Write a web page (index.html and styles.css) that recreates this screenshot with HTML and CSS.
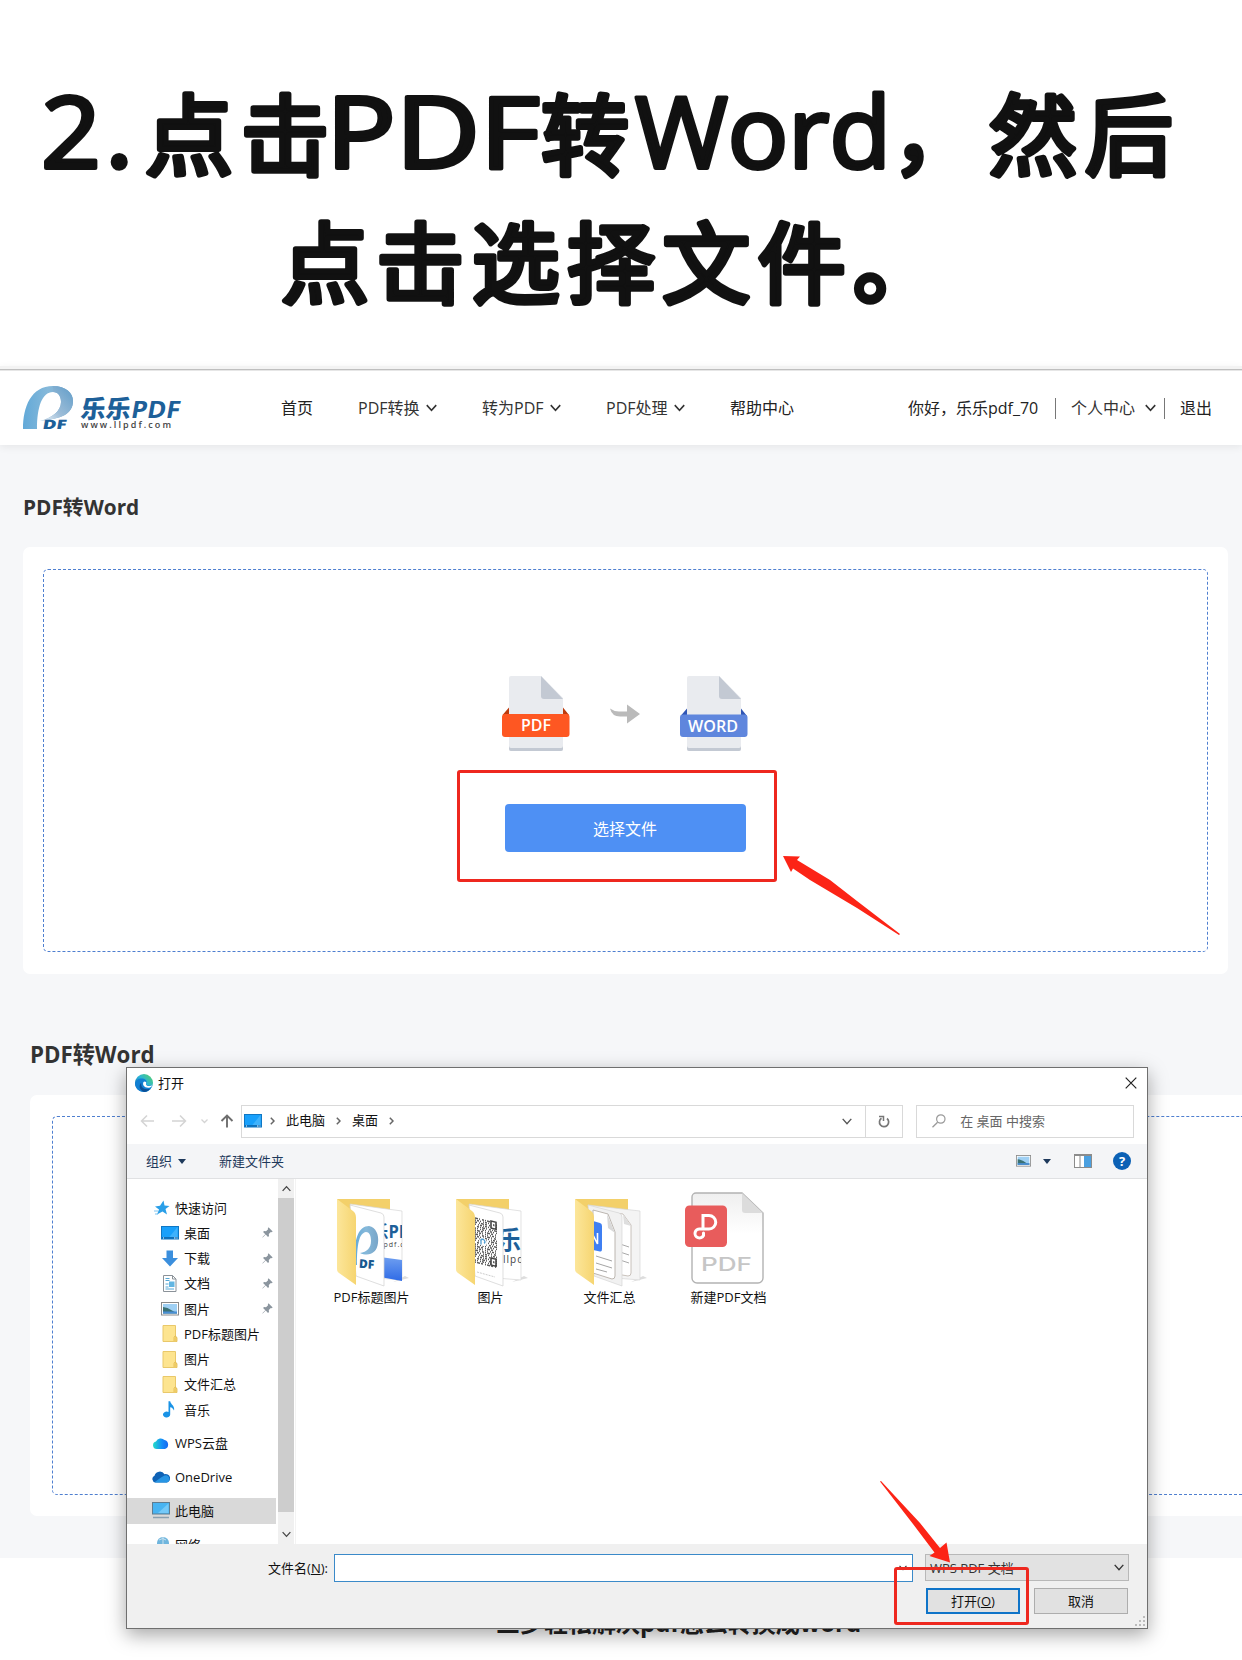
FILE: index.html
```
<!DOCTYPE html>
<html lang="zh-CN">

<head>
    <meta charset="UTF-8">
    <meta name="viewport" content="width=device-width, initial-scale=1.0">
    <title>PDF转Word</title>
    <link rel="stylesheet" href="styles.css">
</head>

<body>

    <!-- shared icons -->
    <svg class="defs" width="0" height="0">
        <defs>
            <linearGradient id="g-logo" x1="0" y1="0" x2="1" y2="0">
                <stop offset="0" stop-color="#62a9d8" />
                <stop offset="0.5" stop-color="#86b9da" />
                <stop offset="1" stop-color="#78a5c8" />
            </linearGradient>
            <linearGradient id="g-bowl" x1="1" y1="0" x2="0" y2="1">
                <stop offset="0" stop-color="#5f9cc8" />
                <stop offset="0.6" stop-color="#9dbdd8" />
                <stop offset="1" stop-color="#f2f6fa" />
            </linearGradient>
            <linearGradient id="g-front" x1="0" y1="0" x2="1" y2="0">
                <stop offset="0" stop-color="#fce69a" />
                <stop offset="1" stop-color="#f6d571" />
            </linearGradient>
            <linearGradient id="g-edge" x1="1" y1="0" x2="0" y2="1">
                <stop offset="0" stop-color="#5ad45a" />
                <stop offset="0.45" stop-color="#2bb5d8" />
                <stop offset="1" stop-color="#0d58a8" />
            </linearGradient>
            <linearGradient id="g-cloud" x1="0" y1="0" x2="1" y2="0">
                <stop offset="0" stop-color="#24dcc8" />
                <stop offset="0.6" stop-color="#148cf8" />
                <stop offset="1" stop-color="#1668f0" />
            </linearGradient>
            <linearGradient id="g-shot" x1="0" y1="0" x2="0" y2="1">
                <stop offset="0" stop-color="#6f9ff0" />
                <stop offset="1" stop-color="#2f6be6" />
            </linearGradient>
            <linearGradient id="g-paper" x1="0" y1="0" x2="0" y2="1">
                <stop offset="0" stop-color="#efefef" />
                <stop offset="0.45" stop-color="#ffffff" />
            </linearGradient>
        </defs>
        <symbol id="chevron" viewBox="0 0 10 7">
            <path d="M0.7 0.9L5 5.6L9.3 0.9" fill="none" stroke="currentColor" stroke-width="1.4" />
        </symbol>
        <symbol id="desktop" viewBox="0 0 18 14">
            <rect x="0.5" y="0.5" width="17" height="12.5" fill="#18a0fb" stroke="#0f77c4" />
            <path d="M8 11.5L16.500 1v10.500z" fill="#3fb2fc" />
            <rect x="1" y="11" width="16" height="1.800" fill="#0e6fb8" />
            <path d="M2 12h1M13 12h1.500M15.500 12h1" stroke="#fff" />
        </symbol>
        <symbol id="folder" viewBox="0 0 15 17">
            <path d="M0.5 0.5h12.500v12h1.500v4h-14z" fill="#fde48f" stroke="#e9c86a" />
            <path d="M11.500 16v-3.500l1-1.500h1v5.500" fill="#f9d978" stroke="#e0b84c" stroke-width="0.8" />
        </symbol>
        <symbol id="picture" viewBox="0 0 18 14">
            <rect x="0.5" y="0.5" width="17" height="12.500" fill="#fff" stroke="#8a8a8a" />
            <rect x="2" y="2" width="14" height="9.500" fill="#9fd0f4" />
            <path d="M2 5c3 .3 6 1.500 9 3.500s4 1.500 5 1.500v1.500H2z" fill="#3b7275" />
            <path d="M2 9.500h14v2H2z" fill="#4a8fd6" />
        </symbol>
        <symbol id="pin" viewBox="0 0 11 11">
            <path d="M6.500 0.300L10.700 4.500L9.500 5.200L8.800 4.900L6.800 7L7 9L6 9.900L3.700 7.600L0.700 10.600L0.300 10.200L3.300 7.200L1.100 5L2 4L4 4.200L6.100 2.200L5.800 1.400z" fill="#8b959e" />
        </symbol>
        <symbol id="folder-back" viewBox="0 0 78 90">
            <path d="M4 1h53v70H30z" fill="#f3d06a" />
            <path d="M60 84l16-4-4-2z" fill="#ddd" />
        </symbol>
        <symbol id="folder-front" viewBox="0 0 78 90">
            <path d="M4 1L20 13Q23 15 23 20V87L6 75Q4 74 4 71z" fill="url(#g-front)" />
        </symbol>
    </svg>

    <div class="page">

        <h1 class="caption">
            <svg width="1242" height="366" viewBox="0 0 1242 366">
                <text class="latin" y="168" x="41" textLength="60" lengthAdjust="spacingAndGlyphs">2</text>
                <text y="167" x="107">.</text>
                <text y="168" x="145" textLength="184">点击</text>
                <text class="latin" y="168" x="326" textLength="214" lengthAdjust="spacingAndGlyphs">PDF</text>
                <text y="168" x="541">转</text>
                <text class="latin" y="168" x="635" textLength="256" lengthAdjust="spacingAndGlyphs">Word</text>
                <text y="166" x="892">，</text>
                <text y="168" x="989" textLength="184">然后</text>
                <text y="296" x="281" textLength="660">点击选择文件。</text>
            </svg>
        </h1>

        <header class="site-header">
            <svg class="logo" width="164" height="46" viewBox="0 0 164 46">
                <path d="M0 44C0 22 8 1 30 1C43 1 50 8 50 16C50 29 38 34 17 36C29 33 38 26 38 17C38 11 35 7 30 7C19 7 14 22 14 44z" fill="url(#g-logo)" />
                <path d="M30 1C43 1 50 8 50 16C50 29 38 34 17 36C29 33 38 26 38 17C38 11 35 7 30 7z" fill="url(#g-bowl)" />
                <text class="logo-small" transform="translate(19 44) skewX(-10)" textLength="24" lengthAdjust="spacingAndGlyphs">DF</text>
                <text class="logo-name" transform="translate(57 33) skewX(-6)" textLength="50" lengthAdjust="spacingAndGlyphs">乐乐</text>
                <text class="logo-pdf" transform="translate(107 33) skewX(-10)" textLength="49" lengthAdjust="spacingAndGlyphs">PDF</text>
                <text class="logo-url" x="58" y="43" textLength="90">www.llpdf.com</text>
            </svg>
            <nav class="nav">
                <a>首页</a>
                <a class="has-menu">PDF转换<svg width="11" height="8"><use href="#chevron" /></svg></a>
                <a class="has-menu">转为PDF<svg width="11" height="8"><use href="#chevron" /></svg></a>
                <a class="has-menu">PDF处理<svg width="11" height="8"><use href="#chevron" /></svg></a>
                <a>帮助中心</a>
            </nav>
            <div class="user">
                <span class="hello">你好，乐乐pdf_70</span>
                <i class="sep"></i>
                <a class="center">个人中心<svg width="11" height="8"><use href="#chevron" /></svg></a>
                <i class="sep"></i>
                <a class="logout">退出</a>
            </div>
        </header>

        <section class="convert">
            <h2>PDF转Word</h2>
            <div class="card">
                <div class="dropzone">
                    <div class="formats">
                        <svg width="68" height="76" viewBox="0 0 68 76">
                            <path d="M9 0H39L61 22V73a2 2 0 0 1-2 2H9a2 2 0 0 1-2-2V2a2 2 0 0 1 2-2z" fill="#e9ebef" />
                            <path d="M39 0L61 23H42a3 3 0 0 1-3-3z" fill="#c3c9d3" />
                            <path d="M7 70q0 2 2 2H59q2 0 2-2v3q0 2-2 2H9q-2 0-2-2z" fill="#c3c9d3" />
                            <path d="M0.500 39L7 31.500V39zM67 39L61 31.500V39z" fill="#bd3b0d" />
                            <path d="M3 38H64.500a3 3 0 0 1 3 3V58a3 3 0 0 1-3 3H3a3 3 0 0 1-3-3V41a3 3 0 0 1 3-3z" fill="#fe5722" />
                            <text class="tag" x="19" y="55" textLength="30" lengthAdjust="spacingAndGlyphs">PDF</text>
                        </svg>
                        <svg width="30" height="20" viewBox="0 0 30 20">
                            <path d="M0 4.500Q4 7.500 9 7.500H17V0.500L30 10L17 19.500V12.500H10Q2 12.500 0 4.500z" fill="#bababa" />
                        </svg>
                        <svg width="68" height="76" viewBox="0 0 68 76">
                            <path d="M9 0H39L61 22V73a2 2 0 0 1-2 2H9a2 2 0 0 1-2-2V2a2 2 0 0 1 2-2z" fill="#e9ebef" />
                            <path d="M39 0L61 23H42a3 3 0 0 1-3-3z" fill="#c3c9d3" />
                            <path d="M7 70q0 2 2 2H59q2 0 2-2v3q0 2-2 2H9q-2 0-2-2z" fill="#c3c9d3" />
                            <path d="M0.500 40L7 32.500V40zM67 40L61 32.500V40z" fill="#2f55b5" />
                            <path d="M3 38.500H64.500a3 3 0 0 1 3 3V58a3 3 0 0 1-3 3H3a3 3 0 0 1-3-3V41.500a3 3 0 0 1 3-3z" fill="#5f86dd" />
                            <text class="tag" x="8" y="56" textLength="50" lengthAdjust="spacingAndGlyphs">WORD</text>
                        </svg>
                    </div>
                    <button class="choose">选择文件</button>
                </div>
            </div>
        </section>

        <section class="convert second">
            <h2>PDF转Word</h2>
            <div class="card">
                <div class="dropzone"></div>
            </div>
        </section>

        <h3 class="article-title">三步轻松解决pdf怎么转换成word</h3>

        <!-- file dialog -->
        <div class="dialog">
            <div class="title-bar">
                <svg width="18" height="18" viewBox="0 0 18 18">
                    <circle cx="9" cy="9" r="9" fill="url(#g-edge)" />
                    <path d="M0 9.500C1 5 5 4 8 4.500C11 5 12 7 11.500 8.500C11 10 11 11 13 11.500C15 12 16.500 11.500 17.500 11C16 15.500 13 18 9 18C4 18 0 14 0 9.500z" fill="#127fd2" />
                    <path d="M6.500 8.500C5 13 9 16.500 15 14.800C13 17 11 18 9 18C4 16 3.500 11 6.500 8.500z" fill="#0c4f96" />
                    <path d="M8.500 8C7 11 9.500 14.500 15 13.500C17 12.500 17.500 11.500 17.500 11C15.500 12.500 11 12.500 11 10C11 9.500 11.500 9 11 8Q9.500 7 8.500 8z" fill="#fff" />
                </svg>
                <span>打开</span>
                <svg class="close" width="12" height="12" viewBox="0 0 12 12">
                    <path d="M0.700 0.700L11.300 11.300M11.300 0.700L0.700 11.300" stroke="#222" stroke-width="1.200" />
                </svg>
            </div>

            <div class="address-bar">
                <svg class="history" width="94" height="16" viewBox="0 0 94 16">
                    <path d="M14 8H1.500M7 2.500L1.500 8L7 13.500M32 8H45.500M40 2.500L45.500 8L40 13.500" fill="none" stroke="#d4d4d4" stroke-width="1.500" />
                    <path d="M61.500 6.500L64.500 9.500L67.500 6.500" fill="none" stroke="#d4d4d4" stroke-width="1.300" />
                    <path d="M87 14.500V2.500M81.500 8L87 2.500L92.500 8" fill="none" stroke="#6e6e6e" stroke-width="1.900" />
                </svg>
                <div class="path">
                    <svg width="18" height="14"><use href="#desktop" /></svg>
                    <svg class="crumb" width="5" height="8" viewBox="0 0 5 8"><path d="M0.800 0.800L4 4L0.800 7.200" fill="none" stroke="#666" stroke-width="1.500" /></svg>
                    <span>此电脑</span>
                    <svg class="crumb" width="5" height="8" viewBox="0 0 5 8"><path d="M0.800 0.800L4 4L0.800 7.200" fill="none" stroke="#666" stroke-width="1.500" /></svg>
                    <span>桌面</span>
                    <svg class="crumb" width="5" height="8" viewBox="0 0 5 8"><path d="M0.800 0.800L4 4L0.800 7.200" fill="none" stroke="#666" stroke-width="1.500" /></svg>
                    <svg class="drop" width="10" height="7"><use href="#chevron" /></svg>
                </div>
                <div class="refresh">
                    <svg width="12" height="13" viewBox="0 0 12 13">
                        <path d="M9 3.500A4.600 4.600 0 1 1 3.500 3.200" fill="none" stroke="#777" stroke-width="1.700" />
                        <path d="M1 1.500H5.500V6" fill="none" stroke="#777" stroke-width="1.500" />
                    </svg>
                </div>
                <div class="search">
                    <svg width="14" height="14" viewBox="0 0 14 14">
                        <circle cx="8.800" cy="5" r="4.200" fill="none" stroke="#9a9a9a" stroke-width="1.200" />
                        <path d="M5.600 8.200L0.500 13.300" stroke="#9a9a9a" stroke-width="1.300" />
                    </svg>
                    <span>在 桌面 中搜索</span>
                </div>
            </div>

            <div class="tool-bar">
                <span>组织</span><i class="caret"></i>
                <span class="new-folder">新建文件夹</span>
                <svg class="view" width="15" height="12" viewBox="0 0 18 14" preserveAspectRatio="none"><use href="#picture" /></svg>
                <i class="caret"></i>
                <svg class="pane" width="18" height="14" viewBox="0 0 18 14">
                    <rect x="0.500" y="0.500" width="17" height="13" fill="#fff" stroke="#8c8c8c" />
                    <path d="M1 1.500h16M6 2v11" stroke="#8c8c8c" />
                    <rect x="10" y="2" width="7" height="11" fill="#4ba0e0" />
                </svg>
                <b class="help">?</b>
            </div>

            <div class="browser">
                <div class="tree">
                    <div class="item root"><svg width="16" height="16" viewBox="0 0 16 16"><path d="M9.500 0.500L10.500 5.500L15.500 6L11.500 9L13 14.500L8.500 11.500L3 14.500L5 9.500L1 6.500L6 5.700z" fill="#2a9fe8" /><path d="M0 11h4M1 14h3" stroke="#7cc3f0" /></svg>快速访问</div>
                    <div class="item"><svg width="18" height="14"><use href="#desktop" /></svg>桌面<svg class="pin" width="11" height="11"><use href="#pin" /></svg></div>
                    <div class="item"><svg width="18" height="17" viewBox="0 0 18 17"><path d="M5.500 0.500h6.500V8h5L9 16.500L1 8h4.500z" fill="#3b8fdd" /></svg>下载<svg class="pin" width="11" height="11"><use href="#pin" /></svg></div>
                    <div class="item"><svg width="18" height="17" viewBox="0 0 18 17"><path d="M2.500 0.500h9l3.500 3.500v12.500h-12.500z" fill="#fff" stroke="#8b9299" /><path d="M11.500 0.500v3.500h3.500" fill="none" stroke="#8b9299" /><path d="M4.500 3.500h4M4.500 5.500h4M4.500 9h3M4.500 12h3M4.500 14h8.500" stroke="#56a8d6" /><path d="M8 6.500h5.500v5.500h-5.500z" fill="#63b6e2" /></svg>文档<svg class="pin" width="11" height="11"><use href="#pin" /></svg></div>
                    <div class="item"><svg width="18" height="14"><use href="#picture" /></svg>图片<svg class="pin" width="11" height="11"><use href="#pin" /></svg></div>
                    <div class="item"><svg width="18" height="17"><use href="#folder" /></svg>PDF标题图片</div>
                    <div class="item"><svg width="18" height="17"><use href="#folder" /></svg>图片</div>
                    <div class="item"><svg width="18" height="17"><use href="#folder" /></svg>文件汇总</div>
                    <div class="item"><svg width="18" height="17" viewBox="0 0 18 17"><path d="M7.500 0.300h1.700C10 4 14 4.500 13 9.500C12 7.500 11 6.500 9.200 6.300V13.500A3.600 3 0 1 1 7.500 11z" fill="#1a93e6" /></svg>音乐</div>
                    <div class="item root apart"><svg width="18" height="14" viewBox="0 0 18 14"><path d="M5 13A3.800 3.800 0 0 1 4 5.500A5.200 5.200 0 0 1 12.500 4A4.700 4.700 0 0 1 13 13z" fill="url(#g-cloud)" /></svg>WPS云盘</div>
                    <div class="item root apart"><svg width="18" height="14" viewBox="0 0 18 14"><path d="M3.500 12.500A3.500 3.500 0 0 1 2.500 5.800A5.500 5.500 0 0 1 12.500 4.200A4.300 4.300 0 0 1 15 12.500z" fill="#0f62b5" /><path d="M2.500 12.200L9 7.500L12.500 5.500A3.700 3.700 0 0 1 15 12.500H3.500z" fill="#2795e4" /></svg>OneDrive</div>
                    <div class="item root apart active"><svg width="18" height="17" viewBox="0 0 18 17"><rect x="0.500" y="0.500" width="17" height="11.500" fill="#48b4f2" stroke="#5f7c90" /><path d="M6 11L16.500 1.500V11z" fill="#74c9f8" /><path d="M1 15.500h16" stroke="#8aa0b0" stroke-width="1.500" /></svg>此电脑</div>
                    <div class="item root apart"><svg width="18" height="17" viewBox="0 0 18 17"><circle cx="11" cy="7" r="6" fill="#6fb5dd" /><path d="M7 4q4-3 7 0M11 1v11" stroke="#c8e2f0" fill="none" /><path d="M3 9h7v6H3z" fill="#3f86c0" /></svg>网络</div>
                </div>
                <div class="scrollbar">
                    <svg class="up" width="9" height="7"><use href="#chevron" /></svg>
                    <div class="thumb"></div>
                    <svg width="9" height="7"><use href="#chevron" /></svg>
                </div>
                <div class="files">
                    <div class="file">
                        <svg width="78" height="90" viewBox="0 0 78 90">
                            <use href="#folder-back" />
                            <path d="M17 6L69 13V82L44 80z" fill="#fff" stroke="#d5d5d5" stroke-width="0.700" />
                            <path d="M47 59L69 62V83L47 79z" fill="url(#g-shot)" />
                            <svg x="48" y="22" width="21" height="32">
                                <text class="thumb-name" x="-9" y="18" textLength="48" lengthAdjust="spacingAndGlyphs">乐PDF</text>
                                <text class="thumb-url" x="-3" y="27">llpdf.com</text>
                            </svg>
                            <path d="M17 7L48 15Q51 16 51 19V88L23 78z" fill="#fff" stroke="#d0d0d0" stroke-width="0.700" />
                            <path d="M21 67C21 39 26 28 36 28C43 29 46 37 45 45C44 55 36 59 27 55C34 54 38 50 38 43C38 37 36 34 33 34C26 35 24 47 24 67z" fill="url(#g-logo)" />
                            <text class="thumb-df" x="26" y="70" transform="rotate(4 28 66)">DF</text>
                            <use href="#folder-front" />
                        </svg>
                        <span>PDF标题图片</span>
                    </div>
                    <div class="file">
                        <svg width="78" height="90" viewBox="0 0 78 90">
                            <use href="#folder-back" />
                            <path d="M17 6L69 13V82L44 80z" fill="#fff" stroke="#d5d5d5" stroke-width="0.700" />
                            <svg x="50" y="27" width="19" height="45">
                                <text class="thumb-name big" x="-5" y="24" textLength="70" lengthAdjust="spacingAndGlyphs">乐PDF</text>
                                <text class="thumb-url big" x="1" y="38">llpdf</text>
                            </svg>
                            <path d="M17 7L48 15Q51 16 51 19V88L23 78z" fill="#fff" stroke="#d0d0d0" stroke-width="0.700" />
                            <g transform="matrix(1 0.250 0 1 23 19)" fill="none" stroke="#5a5a5a" stroke-width="1.300">
                                <path d="M0 1h22M0 17h22M0 33h22" stroke-dasharray="3 1 1 2 2 1 1 1" />
                                <path d="M0 9h22M0 25h22M0 41h22" stroke-dasharray="3 1 1 2 2 1 1 1" stroke-dashoffset="5" />
                                <path d="M0 3h22M0 19h22M0 35h22" stroke-dasharray="1 1 2 1 1 2" />
                                <path d="M0 11h22M0 27h22M0 43h22" stroke-dasharray="1 1 2 1 1 2" stroke-dashoffset="3" />
                                <path d="M0 5h22M0 21h22M0 37h22" stroke-dasharray="2 2 1 1 3 1" />
                                <path d="M0 13h22M0 29h22M0 45h22" stroke-dasharray="2 2 1 1 3 1" stroke-dashoffset="4" />
                                <path d="M0 7h22M0 23h22M0 39h22" stroke-dasharray="1 2 1 1 2 1 1" />
                                <path d="M0 15h22M0 31h22" stroke-dasharray="1 2 1 1 2 1 1" stroke-dashoffset="6" />
                                <path d="M16 0h5v7h-5zM16 37h5v7h-5z" fill="#fff" stroke="#444" stroke-width="1.600" />
                                <path d="M18 3.500h1.500M18 40.500h1.500" stroke-width="2" />
                                <circle cx="8" cy="23" r="4" fill="#fff" stroke="none" />
                                <path d="M6 26v-3a2 2 0 1 1 3 1" stroke="#529dcf" />
                            </g>
                            <path d="M25 74L43 79" stroke="#ccc" stroke-dasharray="2 1" />
                            <use href="#folder-front" />
                        </svg>
                        <span>图片</span>
                    </div>
                    <div class="file">
                        <svg width="78" height="90" viewBox="0 0 78 90">
                            <use href="#folder-back" />
                            <path d="M17 7L69 13V82L44 80z" fill="#f4f4f4" stroke="#d5d5d5" stroke-width="0.700" />
                            <path d="M36 14L52 16L60 27V75Q60 78 57 78L40 75z" fill="#fff" stroke="#bcb4ac" stroke-width="0.800" />
                            <path d="M49 46L58 49M49 54L58 57M49 62L58 65" stroke="#aaa" />
                            <path d="M52 16L60 28L53 26z" fill="#dedede" />
                            <path d="M17 7L48 15Q51 16 51 19V88L23 78z" fill="#f1f1f1" stroke="#d5d5d5" stroke-width="0.700" />
                            <path d="M22 12L37 16L44 34V78Q44 81 41 81L22 75z" fill="#fff" stroke="#b5afa8" stroke-width="0.900" />
                            <path d="M36 16L44 35L37 30z" fill="#d9d9d9" />
                            <path d="M22 23L29 25Q31 25.500 31 28V51Q31 54 29 53.500L22 52z" fill="#3f7ff2" />
                            <path d="M22 37L26.500 46V35" fill="none" stroke="#fff" stroke-width="1.600" />
                            <path d="M25 58L41 63M25 65L41 70M25 71L36 74" stroke="#a5a5a5" />
                            <use href="#folder-front" />
                        </svg>
                        <span>文件汇总</span>
                    </div>
                    <div class="file">
                        <svg width="82" height="96" viewBox="0 0 82 96">
                            <path d="M12 1H58L79 21V86a5 5 0 0 1-5 5H13a5 5 0 0 1-5-5V5a4 4 0 0 1 4-4z" fill="url(#g-paper)" stroke="#b3b3b3" stroke-width="1.400" />
                            <path d="M58 1L79 21H61a3 3 0 0 1-3-3z" fill="#dcdcdc" />
                            <rect x="1" y="13.500" width="42" height="41.500" rx="4.500" fill="#e85c5c" />
                            <path d="M19 37V23.500H25A6.700 6.700 0 0 1 25 37H16A4.500 4.500 0 1 0 19.500 43.500V41" fill="none" stroke="#fff" stroke-width="3" stroke-linecap="round" />
                            <text class="file-type" x="17" y="79" textLength="51" lengthAdjust="spacingAndGlyphs">PDF</text>
                        </svg>
                        <span>新建PDF文档</span>
                    </div>
                </div>
            </div>

            <div class="dialog-footer">
                <div class="row">
                    <label>文件名(<u>N</u>):</label>
                    <div class="filename"><svg width="8" height="6"><use href="#chevron" /></svg></div>
                    <div class="filetype">WPS PDF 文档<svg width="10" height="7"><use href="#chevron" /></svg></div>
                </div>
                <div class="row actions">
                    <button class="btn primary">打开(<u>O</u>)</button>
                    <button class="btn">取消</button>
                </div>
                <svg class="grip" width="10" height="10" viewBox="0 0 10 10">
                    <path d="M8 0h2v2h-2zM8 4h2v2h-2zM4 4h2v2h-2zM8 8h2v2h-2zM4 8h2v2h-2zM0 8h2v2h-2z" fill="#bbb" />
                </svg>
            </div>
        </div>

        <!-- red marks over the page -->
        <div class="mark mark-choose"></div>
        <div class="mark mark-open"></div>
        <svg class="arrow arrow-choose" width="120" height="82" viewBox="0 0 120 82">
            <path d="M0 1L17 1.500L14 5L47 25L74 46L117 79L116 80L74 53L27 25L10 13.500L8 17z" fill="#fc2416" />
        </svg>
        <svg class="arrow arrow-open" width="74" height="84" viewBox="0 0 74 84">
            <path d="M0 0.500L1 0L40 42L60 67L66.500 61.500L70 81.500L49.500 75L54.500 71.500L33 43z" fill="#fc2416" />
        </svg>

    </div>

</body>

</html>
```
FILE: styles.css
```
body {
    margin: 0;
    background: #fff;
    font-family: "Open Sans", "Noto Sans CJK SC", sans-serif;
    color: #333;
}

h1,
h2,
h3 {
    margin: 0;
}

svg {
    display: block;
    flex-shrink: 0;
}

.defs {
    position: absolute;
}

.page {
    position: relative;
    width: 1242px;
    height: 1660px;
    overflow: hidden;
}

/* caption */
.caption {
    height: 366px;
}

.caption text {
    font-family: "Noto Sans CJK SC", sans-serif;
    font-size: 88px;
    font-weight: 400;
    fill: #111;
    stroke: #111;
    stroke-width: 5.500px;
    stroke-linejoin: round;
}

.caption .latin {
    font-family: "Open Sans", sans-serif;
    font-size: 98px;
    stroke-width: 4px;
}

/* header */
.site-header {
    position: relative;
    display: flex;
    align-items: center;
    box-sizing: border-box;
    height: 79px;
    padding: 0 30px 0 23px;
    background: linear-gradient(#f3f3f3 3px, #bfbfbf 3px, #bfbfbf 4px, #e6e6e6 4px, #e6e6e6 5px, #fff 5px);
    box-shadow: 0 2px 8px rgba(0, 0, 0, 0.07);
    font-size: 16px;
    line-height: 24px;
    color: #222;
    white-space: nowrap;
}

.site-header>* {
    margin-top: 5px;
}

.logo text {
    font-weight: 700;
    fill: #1d6099;
}

.logo .logo-small {
    font-size: 13px;
    font-weight: 800;
}

.logo .logo-name {
    font-size: 25px;
    font-weight: 900;
}

.logo .logo-pdf {
    font-size: 24px;
}

.logo .logo-url {
    font-size: 9px;
    font-weight: 600;
    fill: #444;
}

.nav {
    display: flex;
    gap: 45px;
    margin-left: 94px;
}

.has-menu,
.center {
    display: flex;
    align-items: center;
    justify-content: space-between;
    width: 79px;
    color: #333;
}

.user {
    display: flex;
    align-items: center;
    margin-left: auto;
}

.hello {
    width: 147px;
}

.center {
    width: 85px;
    margin: 0 8px 0 15px;
}

.logout {
    margin-left: 15px;
}

.sep {
    width: 1px;
    height: 21px;
    background: #777;
}

/* convert block */
.convert {
    box-sizing: border-box;
    height: 558px;
    padding: 49px 14px 0 23px;
    background: #f6f7f9;
}

.convert h2 {
    height: 53px;
    font-size: 20.800px;
    line-height: 26px;
    font-weight: 700;
}

.card {
    box-sizing: border-box;
    height: 427px;
    padding: 22px 20px;
    background: #fff;
    border-radius: 7px;
}

.dropzone {
    box-sizing: border-box;
    height: 383px;
    padding-top: 106px;
    border: 1px dashed #4f7fd0;
    border-radius: 5px;
}

.formats {
    display: flex;
    align-items: center;
    justify-content: center;
    gap: 40px;
    padding-right: 2px;
}

.formats svg:nth-child(2) {
    margin-top: -1px;
}

.tag {
    font-size: 17px;
    font-weight: 600;
    fill: #fff;
}

.choose {
    display: block;
    width: 241px;
    height: 48px;
    margin: 52px auto 0;
    padding: 0 1px 0 0;
    border: none;
    border-radius: 4px;
    background: #4e90f4;
    color: #fff;
    font: 16px "Noto Sans CJK SC", sans-serif;
}

.second {
    height: 555px;
    padding: 39px 0 0 30px;
}

.second h2 {
    height: 53px;
    font-size: 22.300px;
}

.second .card {
    height: 421px;
    padding: 21px 0 0 22px;
    border-radius: 7px 0 0 7px;
}

.second .dropzone {
    height: 379px;
    border-right: none;
    border-radius: 5px 0 0 5px;
}

.article-title {
    margin-top: 45px;
    padding-left: 496px;
    font-size: 24px;
    line-height: 40px;
    color: #222;
    white-space: nowrap;
}

/* dialog */
.dialog {
    position: absolute;
    left: 126px;
    top: 1067px;
    display: flex;
    flex-direction: column;
    box-sizing: border-box;
    width: 1022px;
    height: 562px;
    border: 1px solid #6f6f6f;
    background: #fff;
    box-shadow: 0 6px 18px rgba(0, 0, 0, 0.35);
    font-size: 13px;
    line-height: 18px;
    color: #111;
    white-space: nowrap;
}

.title-bar {
    display: flex;
    align-items: center;
    gap: 5px;
    box-sizing: border-box;
    height: 30px;
    padding: 0 10px 0 8px;
}

.close {
    margin-left: auto;
}

.address-bar {
    display: flex;
    align-items: center;
    height: 46px;
    padding: 0 13px;
}

.address-bar>div {
    display: flex;
    align-items: center;
    box-sizing: border-box;
    height: 33px;
    border: 1px solid #d9d9d9;
}

.history {
    margin-right: 7px;
}

.path {
    width: 626px;
    padding: 0 13px 0 2px;
}

.path span {
    margin-top: -2px;
}

.crumb {
    margin: 0 11px 0 8px;
}

.path span+.crumb {
    margin-left: 11px;
}

.drop {
    margin-left: auto;
    color: #555;
}

.refresh {
    width: 38px;
    margin: 0 13px 0 -1px;
    justify-content: center;
}

.search {
    width: 218px;
    padding-left: 15px;
    color: #666;
}

.search span {
    margin-left: 14px;
}

.tool-bar {
    display: flex;
    align-items: center;
    box-sizing: border-box;
    height: 35px;
    padding: 0 16px 0 19px;
    background: #f4f5f7;
    border-bottom: 1px solid #e0e1e3;
    color: #1e395b;
}

.caret {
    margin-left: 6px;
    border: 4px solid transparent;
    border-top: 5px solid #1e395b;
    border-bottom: none;
}

.new-folder {
    margin-left: 33px;
}

.view {
    margin-left: auto;
    margin-right: 6px;
}

.pane {
    margin: 0 21px 0 23px;
}

.help {
    width: 18px;
    height: 18px;
    border-radius: 50%;
    background: #0c61b5;
    color: #fff;
    text-align: center;
}

.browser {
    display: flex;
    height: 365px;
}

.tree {
    width: 151px;
    padding-top: 16px;
    box-sizing: border-box;
    overflow: hidden;
}

.item {
    display: flex;
    align-items: center;
    width: 149px;
    height: 25.250px;
    padding-left: 34px;
    box-sizing: border-box;
}

.item svg:first-child {
    width: 18px;
    margin-right: 5px;
}

.item.root {
    padding-left: 25px;
}

.item.root:first-child svg {
    width: 16px;
    margin: 0 5px 0 2px;
}

.item.apart {
    margin-top: 8.500px;
}

.item.active {
    background: #d9d9d9;
}

.pin {
    margin-left: auto;
    margin-right: 3px;
}

.scrollbar {
    display: flex;
    flex-direction: column;
    align-items: center;
    justify-content: space-between;
    box-sizing: border-box;
    width: 16px;
    padding: 6px 0 6px;
    background: #f0f0f0;
    color: #444;
}

.up {
    transform: rotate(180deg);
}

.thumb {
    width: 16px;
    height: 314px;
    margin-bottom: 13px;
    background: #cdcdcd;
}

.files {
    display: flex;
    padding: 11px 0 0 16px;
    border-left: 1px solid #f3f3f3;
    margin-left: 1px;
}

.file {
    display: flex;
    flex-direction: column;
    align-items: center;
    justify-content: flex-end;
    width: 119px;
    height: 116px;
}

.file:last-child svg {
    margin: 0 8px 0 0;
}

.thumb-name {
    font-size: 17px;
    font-weight: 700;
    fill: #1d6099;
}

.thumb-url {
    font-size: 7px;
    letter-spacing: 1px;
    fill: #444;
}

.thumb-name.big {
    font-size: 25px;
}

.thumb-url.big {
    font-size: 10px;
}

.thumb-df {
    font-size: 12px;
    font-weight: 800;
    fill: #17598f;
}

.file-type {
    font-family: Inter, sans-serif;
    font-size: 19px;
    font-weight: 500;
    fill: #c6c6c6;
}

.dialog-footer {
    position: relative;
    flex: 1;
    padding-top: 9px;
    background: #f0f0f0;
}

.row {
    display: flex;
    align-items: center;
    height: 29px;
}

.row label {
    width: 201px;
    text-align: right;
}

.filename,
.filetype {
    display: flex;
    align-items: center;
    justify-content: flex-end;
    box-sizing: border-box;
    width: 579px;
    height: 28px;
    margin-left: 6px;
    padding-right: 5px;
    border: 1px solid #3b8ac9;
    background: #fff;
    color: #333;
}

.filetype {
    justify-content: space-between;
    width: 204px;
    height: 27px;
    margin-left: 12px;
    padding: 0 4px;
    border: 1px solid #b8b8b8;
    background: #e2e2e2;
}

.actions {
    justify-content: flex-end;
    gap: 14px;
    margin-top: 4px;
    padding-right: 19px;
}

.btn {
    box-sizing: border-box;
    width: 94px;
    height: 26px;
    padding: 0;
    border: 1px solid #adadad;
    background: #e1e1e1;
    color: #111;
    font: inherit;
}

.btn.primary {
    border: 2px solid #0f74c8;
}

.grip {
    position: absolute;
    right: 2px;
    bottom: 2px;
}

/* marks */
.mark {
    position: absolute;
    box-sizing: border-box;
    border: 3px solid #ee281f;
    border-radius: 3px;
}

.mark-choose {
    left: 457px;
    top: 770px;
    width: 320px;
    height: 112px;
}

.mark-open {
    left: 894px;
    top: 1567px;
    width: 135px;
    height: 58px;
}

.arrow {
    position: absolute;
}

.arrow-choose {
    left: 783px;
    top: 855px;
}

.arrow-open {
    left: 880px;
    top: 1481px;
}
```
